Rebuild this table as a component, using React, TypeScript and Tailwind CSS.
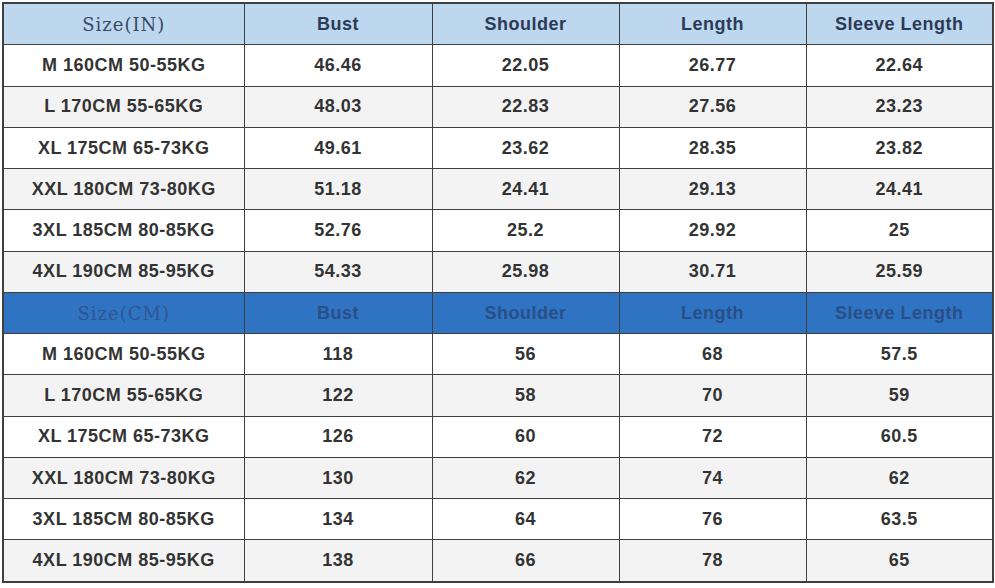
const columns = ['Bust', 'Shoulder', 'Length', 'Sleeve Length'];

const sizes = [
  'M 160CM 50-55KG',
  'L 170CM 55-65KG',
  'XL 175CM 65-73KG',
  'XXL 180CM 73-80KG',
  '3XL 185CM 80-85KG',
  '4XL 190CM 85-95KG',
];

const inches = [
  ['46.46', '22.05', '26.77', '22.64'],
  ['48.03', '22.83', '27.56', '23.23'],
  ['49.61', '23.62', '28.35', '23.82'],
  ['51.18', '24.41', '29.13', '24.41'],
  ['52.76', '25.2', '29.92', '25'],
  ['54.33', '25.98', '30.71', '25.59'],
];

const cms = [
  ['118', '56', '68', '57.5'],
  ['122', '58', '70', '59'],
  ['126', '60', '72', '60.5'],
  ['130', '62', '74', '62'],
  ['134', '64', '76', '63.5'],
  ['138', '66', '78', '65'],
];

const cell = 'border border-[#3f3f3f] text-center align-middle p-0';

const HeaderRow = ({ label, dark }: { label: string; dark: boolean }) => (
  <tr className={dark ? 'bg-[#2f74c2] text-[#2a4f86]' : 'bg-[#bdd7ee] text-[#2b3b57]'}>
    <td className={`${cell} font-['DejaVu_Serif',serif] text-[18px] tracking-[1px] font-normal ${dark ? 'text-[#2f5590]' : 'text-[#3a4a63]'}`}>
      {label}
    </td>
    {columns.map((c) => (
      <td key={c} className={`${cell} font-bold text-[18px]`}>
        {c}
      </td>
    ))}
  </tr>
);

const DataRows = ({ rows }: { rows: string[][] }) => (
  <>
    {rows.map((r, i) => (
      <tr key={sizes[i]} className={i % 2 === 0 ? 'bg-white' : 'bg-[#f3f3f3]'}>
        <td className={cell}>{sizes[i]}</td>
        {r.map((v, j) => (
          <td key={j} className={cell}>
            {v}
          </td>
        ))}
      </tr>
    ))}
  </>
);

export default function App() {
  return (
    <div className="w-[995px] h-[588px] bg-white pt-[2px] pl-[2px]">
      <table className="w-[990px] h-[581px] table-fixed border-collapse border-2 border-[#3f3f3f] font-['Liberation_Sans',Arial,sans-serif] font-bold text-[18px] tracking-[0.5px] text-[#333333]">
        <colgroup>
          <col className="w-[241px]" />
          <col className="w-[188px]" />
          <col className="w-[187px]" />
          <col className="w-[187px]" />
          <col className="w-[187px]" />
        </colgroup>
        <tbody>
          <HeaderRow label="Size(IN)" dark={false} />
          <DataRows rows={inches} />
          <HeaderRow label="Size(CM)" dark />
          <DataRows rows={cms} />
        </tbody>
      </table>
    </div>
  );
}
